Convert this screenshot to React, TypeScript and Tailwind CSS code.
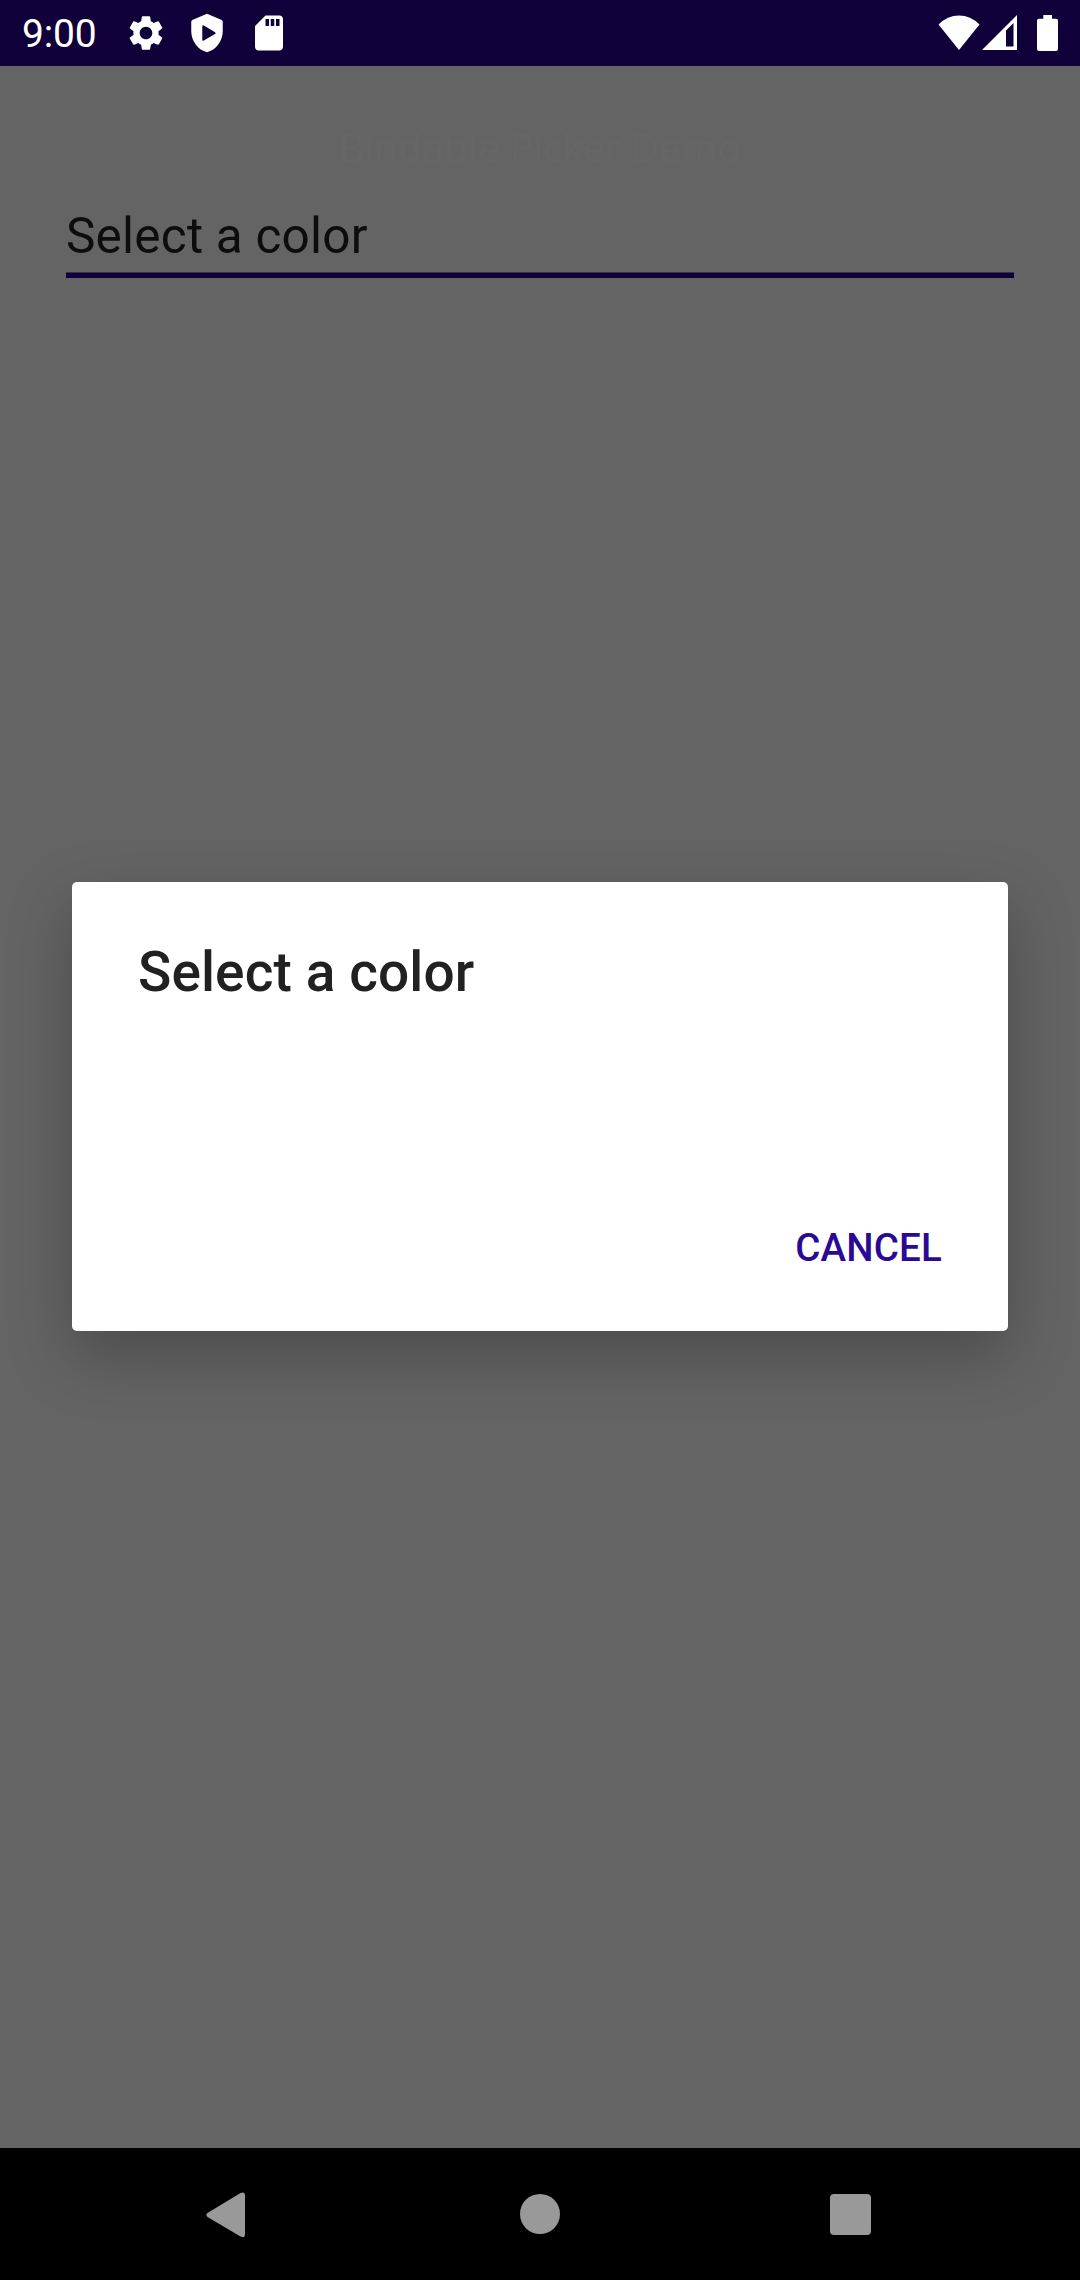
function StatusBar() {
  return (
    <header className="flex h-[66px] items-center justify-between bg-[#11013a] pr-[22px] pl-[22px] text-white">
      <div className="flex items-center">
        <span className="w-[103px] pt-[2px] text-[39px] leading-[64px] tracking-[-0.2px]">9:00</span>
        <svg className="h-[42px] w-[42px]" viewBox="0 0 24 24" fill="currentColor">
          <path d="M19.14 12.94c.04-.3.06-.61.06-.94 0-.32-.02-.64-.07-.94l2.03-1.58a.49.49 0 0 0 .12-.61l-1.92-3.32a.488.488 0 0 0-.59-.22l-2.39.96c-.5-.38-1.03-.7-1.62-.94l-.36-2.54a.484.484 0 0 0-.48-.41h-3.84c-.24 0-.43.17-.47.41l-.36 2.54c-.59.24-1.13.57-1.62.94l-2.39-.96c-.22-.08-.47 0-.59.22L2.74 8.87c-.12.21-.08.47.12.61l2.03 1.58c-.05.3-.09.63-.09.94s.02.64.07.94l-2.03 1.58a.49.49 0 0 0-.12.61l1.92 3.32c.12.22.37.29.59.22l2.39-.96c.5.38 1.03.7 1.62.94l.36 2.54c.05.24.24.41.48.41h3.84c.24 0 .44-.17.47-.41l.36-2.54c.59-.24 1.13-.56 1.62-.94l2.39.96c.22.08.47 0 .59-.22l1.92-3.32c.12-.22.07-.47-.12-.61l-2.01-1.58zM12 15.6c-1.98 0-3.6-1.62-3.6-3.6s1.62-3.6 3.6-3.6 3.6 1.62 3.6 3.6-1.62 3.6-3.6 3.6z" />
        </svg>
        <svg className="ml-[19px] h-[42px] w-[42px]" viewBox="0 0 24 24" fill="currentColor" fillRule="evenodd">
          <path d="M12 1 3.6 4.6Q3 4.9 3 5.6V11c0 5.55 3.84 10.74 9 12 5.16-1.26 9-6.45 9-12V5.6q0-.7-.6-1ZM9.3 8.2q0-1 .9-.5l6.4 3.8q.8.5 0 1l-6.4 3.8q-.9.5-.9-.5Z" />
        </svg>
        <svg className="ml-[20px] h-[42px] w-[42px]" viewBox="0 0 24 24" fill="currentColor">
          <path d="M18 2h-8L4.02 8 4 20c0 1.1.9 2 2 2h12c1.1 0 2-.9 2-2V4c0-1.1-.9-2-2-2zm-6 6h-2V4h2v4zm3 0h-2V4h2v4zm3 0h-2V4h2v4z" />
        </svg>
      </div>
      <div className="flex items-center">
        <svg className="h-9 w-[42px]" viewBox="0 0 42 36" fill="currentColor">
          <path d="M.5 9.5Q9.5 .5 21 .5T41.500 9.500L21 35Z" />
        </svg>
        <svg className="ml-[2px] h-9 w-9" viewBox="0 0 36 36" fill="currentColor" fillRule="evenodd">
          <path d="M0 35 35 0V35ZM24 15.500V31.500H31.500V8Z" />
        </svg>
        <svg className="ml-[19px] h-9 w-[21px]" viewBox="0 0 21 36" fill="currentColor">
          <path d="M6.300 0H15V3.700H19Q21 3.700 21 5.700V34Q21 36 19 36H2Q0 36 0 34V5.700Q0 3.700 2 3.700H6.300Z" />
        </svg>
      </div>
    </header>
  );
}

function Dialog() {
  return (
    <section
      role="dialog"
      className="absolute top-[882px] left-[72px] flex h-[449px] w-[936px] flex-col justify-between rounded-[5px] bg-white px-[66px] pt-[58px] pb-[58px] shadow-[0_24px_64px_rgba(0,0,0,0.25)]"
    >
      <h2 className="text-[55px] leading-[64px] font-medium tracking-[0.1px] text-[#212121]">Select a color</h2>
      <button className="self-end text-[38.5px] leading-[50px] font-medium tracking-[0.2px] text-[#2a0a94]">CANCEL</button>
    </section>
  );
}

function NavigationBar() {
  return (
    <nav className="flex h-[132px] items-center bg-black pl-[206px] text-[#999999]">
      <svg className="mt-px h-[46px] w-[40px]" viewBox="0 0 40 46" fill="currentColor">
        <path d="M1.500 21 34.500 1Q39 -.5 39 3.500V42.500Q39 46.500 34.500 44.500L1.500 25Q-.8 23 1.500 21Z" />
      </svg>
      <span className="ml-[274px] h-10 w-10 rounded-full bg-[#999999]" />
      <span className="mt-px ml-[270px] h-[41px] w-[41px] rounded-[4px] bg-[#999999]" />
    </nav>
  );
}

export default function App() {
  return (
    <div className="relative flex h-[2280px] w-[1080px] flex-col overflow-hidden bg-[#646464] font-[Roboto,sans-serif]">
      <StatusBar />
      <main className="flex flex-1 flex-col px-[66px] pt-[55px]">
        <h1 className="text-center font-['Open_Sans',sans-serif] text-[39.2px] leading-[52px] text-[#666666]">
          Bindable Picker Demo
        </h1>
        <div className="mt-[31px] h-[69px] border-b border-[#3a3052] text-[49.5px] leading-[64px] tracking-[0.22px] text-[#0d0d0d]">
          Select a color
        </div>
        <div className="h-[5px] bg-[#11013a]" />
      </main>
      <NavigationBar />
      <Dialog />
    </div>
  );
}
